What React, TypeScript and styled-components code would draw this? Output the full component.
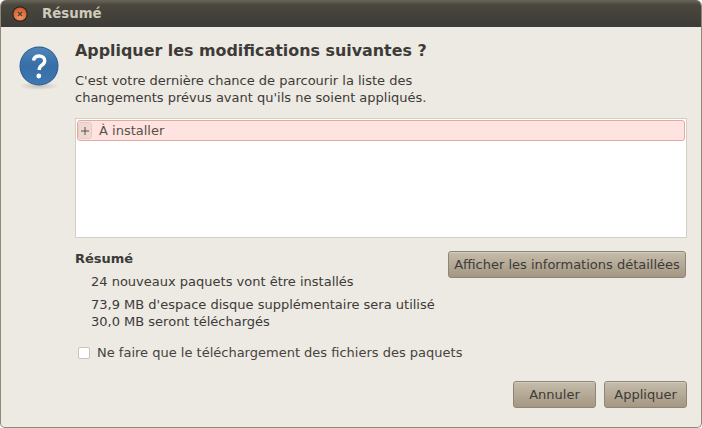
import React from 'react';

import styled, { createGlobalStyle } from 'styled-components';

const GlobalStyle = createGlobalStyle`
  html, body {
    margin: 0;
    padding: 0;
    background: #fff;
  }
`;

const Window = styled.div`
  width: 702px;
  height: 428px;
  box-sizing: border-box;
  display: flex;
  flex-direction: column;
  overflow: hidden;
  border-radius: 6px 6px 5px 5px;
  background: #ede9e3;
  border: 1px solid #8f8a76;
  border-top: none;
  font-family: 'DejaVu Sans', sans-serif;
  font-size: 13px;
  color: #3c3b37;
`;

const TitleBar = styled.div`
  height: 27px;
  flex: none;
  display: flex;
  align-items: center;
  gap: 14px;
  padding: 0 0 0 11px;
  background: linear-gradient(#6a6557 0, #4a473e 5px, #3c3b37 100%);
  color: #cfcabb;
  font-size: 13.33px;
  font-weight: bold;
`;

const Body = styled.div`
  flex: 1;
  display: grid;
  grid-template-columns: 40px 1fr;
  column-gap: 16px;
  padding: 14px 14px 0 18px;
`;

const IconSlot = styled.div`
  width: 40px;
  height: 46px;
  margin-top: 5px;
`;

const Main = styled.div`
  display: flex;
  flex-direction: column;
  min-width: 0;
`;

const Heading = styled.h1`
  margin: 0;
  font-size: 15.9px;
  line-height: 19px;
  font-weight: bold;
`;

const Intro = styled.p`
  margin: 12px 0 0;
  line-height: 17px;
`;

const ListBox = styled.div`
  margin-top: 12px;
  height: 120px;
  box-sizing: border-box;
  padding: 1px;
  background: #fff;
  border: 1px solid #d3cfc3;
`;

const ListRow = styled.div`
  height: 21px;
  box-sizing: border-box;
  display: flex;
  align-items: center;
  gap: 7px;
  background: #ffe3e0;
  border: 1px solid #e5a99e;
  border-radius: 3px;
  color: #5a5048;
`;

const Expander = styled.span`
  width: 14px;
  height: 17px;
  box-sizing: border-box;
  display: flex;
  align-items: center;
  justify-content: center;
  background: #eed9d2;
  border: 1px solid #e6cbc3;
  border-radius: 3px;
`;

const Summary = styled.div`
  display: flex;
  justify-content: space-between;
  align-items: flex-start;
  margin-top: 13px;
`;

const SummaryHeading = styled.div`
  font-weight: bold;
  line-height: 16px;
`;

const SummaryList = styled.div`
  padding-left: 16px;
  line-height: 17px;
`;

const SummaryGroup = styled.div`
  margin-top: 6px;
`;

const Button = styled.button<{ $width: string }>`
  box-sizing: border-box;
  height: 27px;
  padding: 0;
  width: ${props => props.$width};
  margin: 0;
  font: inherit;
  color: #3c3b37;
  white-space: nowrap;
  border: 1px solid #8e8674;
  border-radius: 3px;
  background: linear-gradient(#c6bcab, #a49783);
  box-shadow: inset 0 1px 0 #d3cbbc;
`;

const DetailsButton = styled(Button)`
  margin: 0 1px 0 0;
`;

const CheckRow = styled.label`
  display: flex;
  align-items: center;
  gap: 7px;
  margin: 15px 0 0 3px;
  line-height: 16px;
  color: #45433d;
`;

const CheckBox = styled.span`
  width: 10px;
  height: 10px;
  background: #fff;
  border: 1px solid #c9c4b8;
  border-radius: 2px;
`;

const Footer = styled.div`
  display: flex;
  justify-content: flex-end;
  gap: 8px;
  margin-top: 20px;
`;

function QuestionIcon() {
  return (
    <svg width="40" height="46" viewBox="0 0 40 46">
      <defs>
        <linearGradient id="ball" x1="0" y1="0" x2="0" y2="1">
          <stop offset="0" stopColor="#4f85ba" />
          <stop offset="0.5" stopColor="#366ea5" />
          <stop offset="1" stopColor="#4079b1" />
        </linearGradient>
        <radialGradient id="shade" cx="0.5" cy="0.5" r="0.5">
          <stop offset="0" stopColor="#8a8578" stopOpacity="0.4" />
          <stop offset="1" stopColor="#8a8578" stopOpacity="0" />
        </radialGradient>
      </defs>
      <ellipse cx="20" cy="40" rx="20" ry="4" fill="url(#shade)" />
      <circle cx="20" cy="20" r="19.5" fill="#2b5c92" />
      <circle cx="20" cy="20" r="18.6" fill="url(#ball)" />
      <path
        d="M14.5 14.5c.5-3 2.8-4.5 5.7-4.5 3.2 0 5.5 2 5.5 4.7 0 2.2-1.2 3.4-2.9 4.5-1.9 1.3-2.6 2.4-2.6 4.8"
        fill="none"
        stroke="#fff"
        strokeWidth="3.4"
      />
      <circle cx="19.8" cy="30" r="2.4" fill="#fff" />
    </svg>
  );
}

function CloseIcon() {
  return (
    <svg width="16" height="16" viewBox="0 0 16 16">
      <defs>
        <radialGradient id="closeBall" cx="0.5" cy="0.75" r="0.7">
          <stop offset="0" stopColor="#f9955f" />
          <stop offset="1" stopColor="#d05a30" />
        </radialGradient>
      </defs>
      <circle cx="8" cy="8" r="7.8" fill="#2a2822" />
      <circle cx="8" cy="8" r="6.6" fill="url(#closeBall)" />
      <path d="M5.9 5.9l4.2 4.2M10.1 5.9l-4.2 4.2" stroke="#4a3a30" strokeWidth="1.3" />
    </svg>
  );
}

function PlusIcon() {
  return (
    <svg width="8" height="8" viewBox="0 0 8 8">
      <path d="M0 4h8M4 0v8" stroke="#55504a" strokeWidth="1" />
    </svg>
  );
}

export default function App() {
  return (
    <Window>
      <GlobalStyle />
      <TitleBar>
        <CloseIcon />
        Résumé
      </TitleBar>
      <Body>
        <IconSlot>
          <QuestionIcon />
        </IconSlot>
        <Main>
          <Heading>Appliquer les modifications suivantes ?</Heading>
          <Intro>
            C'est votre dernière chance de parcourir la liste des
            <br />
            changements prévus avant qu'ils ne soient appliqués.
          </Intro>
          <ListBox>
            <ListRow>
              <Expander>
                <PlusIcon />
              </Expander>
              À installer
            </ListRow>
          </ListBox>
          <Summary>
            <div>
              <SummaryHeading>Résumé</SummaryHeading>
              <SummaryList>
                <SummaryGroup>24 nouveaux paquets vont être installés</SummaryGroup>
                <SummaryGroup>
                  73,9 MB d'espace disque supplémentaire sera utilisé
                  <br />
                  30,0 MB seront téléchargés
                </SummaryGroup>
              </SummaryList>
            </div>
            <DetailsButton $width="238px">Afficher les informations détaillées</DetailsButton>
          </Summary>
          <CheckRow>
            <CheckBox />
            Ne faire que le téléchargement des fichiers des paquets
          </CheckRow>
          <Footer>
            <Button $width="83px">Annuler</Button>
            <Button $width="83px">Appliquer</Button>
          </Footer>
        </Main>
      </Body>
    </Window>
  );
}
